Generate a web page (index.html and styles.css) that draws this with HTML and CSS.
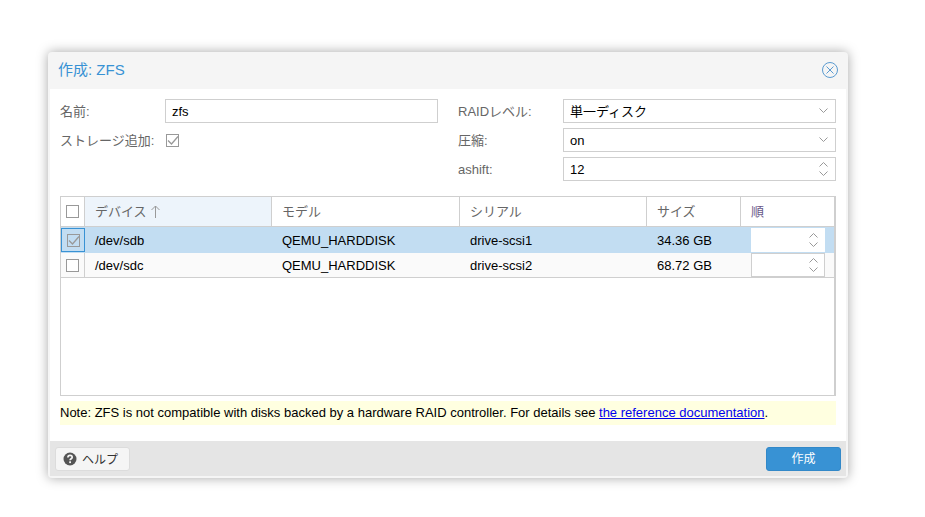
FILE: index.html
```html
<!DOCTYPE html>
<html lang="ja">
<head>
    <meta charset="UTF-8">
    <title>作成: ZFS</title>
    <link rel="stylesheet" href="styles.css">
</head>
<body>

<div class="window">
    <header class="window-head">
        <span class="window-title">作成: ZFS</span>
        <svg class="close-icon" width="16" height="16" viewBox="0 0 16 16">
            <circle cx="8" cy="8" r="7.500"/>
            <path d="M4.500 4.500l7 7M11.500 4.500l-7 7"/>
        </svg>
    </header>

    <main class="window-body">
        <div class="form-cols">
            <div class="form-col">
                <div class="field">
                    <label class="cjk">名前:</label>
                    <div class="input">zfs</div>
                </div>
                <div class="field">
                    <label class="cjk">ストレージ追加:</label>
                    <span class="check is-checked form-check">
                        <svg width="13" height="13" viewBox="0 0 13 13"><path d="M2 6.500l3.500 3.500L12 2.500"/></svg>
                    </span>
                </div>
            </div>
            <div class="form-col">
                <div class="field">
                    <label class="cjk">RAIDレベル:</label>
                    <div class="input"><span class="cjk">単一ディスク</span>
                        <svg class="arrow-down" width="9" height="6" viewBox="0 0 9 6"><path d="M.5 .5l4 4 4-4"/></svg>
                    </div>
                </div>
                <div class="field">
                    <label class="cjk">圧縮:</label>
                    <div class="input">on
                        <svg class="arrow-down" width="9" height="6" viewBox="0 0 9 6"><path d="M.5 .5l4 4 4-4"/></svg>
                    </div>
                </div>
                <div class="field">
                    <label>ashift:</label>
                    <div class="input">12
                        <svg class="spinner" width="9" height="16" viewBox="0 0 9 16"><path d="M.5 5.500l4-4 4 4M.5 10.500l4 4 4-4"/></svg>
                    </div>
                </div>
            </div>
        </div>

        <div class="grid">
            <div class="grid-row grid-head">
                <div class="cell cell-check"><span class="check"></span></div>
                <div class="cell cell-name sorted">
                    <span class="cjk">デバイス</span>
                    <svg class="sort-arrow" width="9" height="13" viewBox="0 0 9 13"><path d="M4.500 13V1M.5 5l4-4 4 4"/></svg>
                </div>
                <div class="cell cell-wide"><span class="cjk">モデル</span></div>
                <div class="cell cell-wide"><span class="cjk">シリアル</span></div>
                <div class="cell cell-size"><span class="cjk">サイズ</span></div>
                <div class="cell cell-order"><span class="cjk">順</span></div>
            </div>
            <div class="grid-row selected">
                <div class="cell cell-check">
                    <span class="check is-checked">
                        <svg width="13" height="13" viewBox="0 0 13 13"><path d="M2 6.500l3.500 3.500L12 2.500"/></svg>
                    </span>
                </div>
                <div class="cell cell-name">/dev/sdb</div>
                <div class="cell cell-wide">QEMU_HARDDISK</div>
                <div class="cell cell-wide">drive-scsi1</div>
                <div class="cell cell-size">34.36 GB</div>
                <div class="cell cell-order">
                    <div class="mini-spin">
                        <svg width="9" height="16" viewBox="0 0 9 16"><path d="M.5 5.500l4-4 4 4M.5 10.500l4 4 4-4"/></svg>
                    </div>
                </div>
            </div>
            <div class="grid-row alt">
                <div class="cell cell-check"><span class="check"></span></div>
                <div class="cell cell-name">/dev/sdc</div>
                <div class="cell cell-wide">QEMU_HARDDISK</div>
                <div class="cell cell-wide">drive-scsi2</div>
                <div class="cell cell-size">68.72 GB</div>
                <div class="cell cell-order">
                    <div class="mini-spin">
                        <svg width="9" height="16" viewBox="0 0 9 16"><path d="M.5 5.500l4-4 4 4M.5 10.500l4 4 4-4"/></svg>
                    </div>
                </div>
            </div>
        </div>

        <p class="note">Note: ZFS is not compatible with disks backed by a hardware RAID controller. For details see <a href="#">the reference documentation</a>.</p>
    </main>

    <footer class="window-foot">
        <button class="btn btn-help">
            <svg width="14" height="14" viewBox="0 0 14 14">
                <circle cx="7" cy="7" r="6.500" fill="#555"/>
                <path d="M4.900 5.400c0-2.700 4.300-2.700 4.300-.2 0 1.500-2.100 1.500-2.100 3" fill="none" stroke="#f5f5f5" stroke-width="1.700"/>
                <rect x="6.200" y="9.300" width="1.800" height="1.800" fill="#f5f5f5"/>
            </svg>
            <span class="cjk">ヘルプ</span>
        </button>
        <button class="btn btn-create">作成</button>
    </footer>
</div>

</body>
</html>
```

FILE: styles.css
```css
* {
    margin: 0;
    padding: 0;
    box-sizing: border-box;
}

body {
    font-family: "Liberation Sans", "Noto Sans CJK JP", sans-serif;
    font-size: 13px;
    color: #000;
    background: #fff;
    min-height: 517px;
    padding: 52px 0 0 48px;
}

/* Noto CJK sits lower in the line box than the latin text */
.cjk {
    padding-bottom: 2px;
}

/* Window */
.window {
    width: 800px;
    height: 426px;
    display: flex;
    flex-direction: column;
    background: #f5f5f5;
    border-radius: 4px;
    box-shadow: 0 0 12px rgba(0, 0, 0, 0.35);
}

.window-head {
    height: 37px;
    flex: none;
    display: flex;
    align-items: center;
    justify-content: space-between;
    padding: 0 2px 0 10px;
}

.window-title {
    color: #3892d4;
    font-size: 15px;
    padding-bottom: 5px;
}

.close-icon {
    margin: 0 8px 1px 0;
    fill: none;
    stroke: #5b9bd0;
    stroke-width: 1;
}

.window-body {
    flex: 1;
    background: #fff;
    margin: 0 2px;
    padding: 10px 10px 0;
}

/* Form */
.form-cols {
    display: flex;
    gap: 20px;
    height: 97px;
}

.form-col {
    width: 378px;
    display: flex;
    flex-direction: column;
    gap: 5px;
}

.field {
    display: flex;
    align-items: center;
    height: 24px;
}

.field label {
    width: 105px;
    flex: none;
    color: #666;
}

.input {
    flex: 1;
    height: 24px;
    display: flex;
    align-items: center;
    justify-content: space-between;
    border: 1px solid #cfcfcf;
    padding: 0 7px 0 6px;
    background: #fff;
}

.arrow-down, .spinner, .mini-spin svg {
    fill: none;
    stroke: #999;
    stroke-width: 1;
}

.check {
    width: 13px;
    height: 13px;
    display: inline-block;
    border: 1px solid #999;
    background: #fff;
    flex: none;
}

.check svg {
    display: block;
    margin: -1px;
    fill: none;
    stroke: #999;
    stroke-width: 1.300;
}

.check.is-checked {
    background: transparent;
}

.form-check {
    margin-left: 1px;
}

/* Disk grid */
.grid {
    height: 200px;
    border: 1px solid #cfcfcf;
    border-right-width: 2px;
}

.grid-row {
    display: flex;
    height: 26px;
    border-bottom: 1px solid #cfcfcf;
}

.grid-row.selected {
    background: #c2ddf2;
    border-bottom: 0;
}

.grid-row.alt {
    background: #fafafa;
    height: 25px;
}

.grid-head {
    height: 30px;
    color: #666;
}

.cell {
    display: flex;
    align-items: center;
    padding-left: 10px;
    flex: none;
}

.grid-head .cell {
    border-right: 1px solid #cfcfcf;
    padding-left: 10px;
}

.grid-head .cell-order {
    border-right: 0;
    color: #6b5a8a;
}

.grid-head .cell-check {
    padding: 0;
}

.cell-check {
    width: 24px;
    padding: 0;
    justify-content: center;
    border-right: 1px solid #cfcfcf;
}

.selected .cell-check {
    height: 24px;
    margin-top: 1px;
    border: 1px solid #3892d4;
}

.cell-name {
    width: 187px;
}

.sorted {
    background: #edf4fb;
    gap: 4px;
}

.sort-arrow {
    fill: none;
    stroke: #999;
    stroke-width: 1;
}

.cell-wide {
    width: 188px;
}

.cell-wide + .cell-wide {
    width: 187px;
}

.cell-size {
    width: 94px;
}

.cell-order {
    width: 93px;
}

.mini-spin {
    width: 74px;
    height: 24px;
    display: flex;
    align-items: center;
    justify-content: flex-end;
    padding-right: 6px;
    background: #fff;
    border: 1px solid #cfcfcf;
}

.selected .mini-spin {
    border-color: #fff;
}

/* Note */
.note {
    height: 24px;
    margin-top: 5px;
    line-height: 24px;
    background: #ffffe0;
}

.note a {
    color: #00e;
}

/* Footer */
.window-foot {
    height: 35px;
    flex: none;
    margin: 0 2px 2px;
    display: flex;
    justify-content: space-between;
    align-items: flex-start;
    padding: 6px 5px 0;
    background: #e5e5e5;
}

.btn {
    width: 75px;
    height: 24px;
    border-radius: 3px;
    font: inherit;
    font-size: 12px;
}

.btn-help {
    display: flex;
    align-items: center;
    gap: 5px;
    padding-left: 7px;
    background: #f5f5f5;
    border: 1px solid #dcdcdc;
    color: #333;
}

.btn-create {
    padding-bottom: 3px;
    background: #3892d4;
    border: 1px solid #3288c8;
    color: #fff;
}
```
